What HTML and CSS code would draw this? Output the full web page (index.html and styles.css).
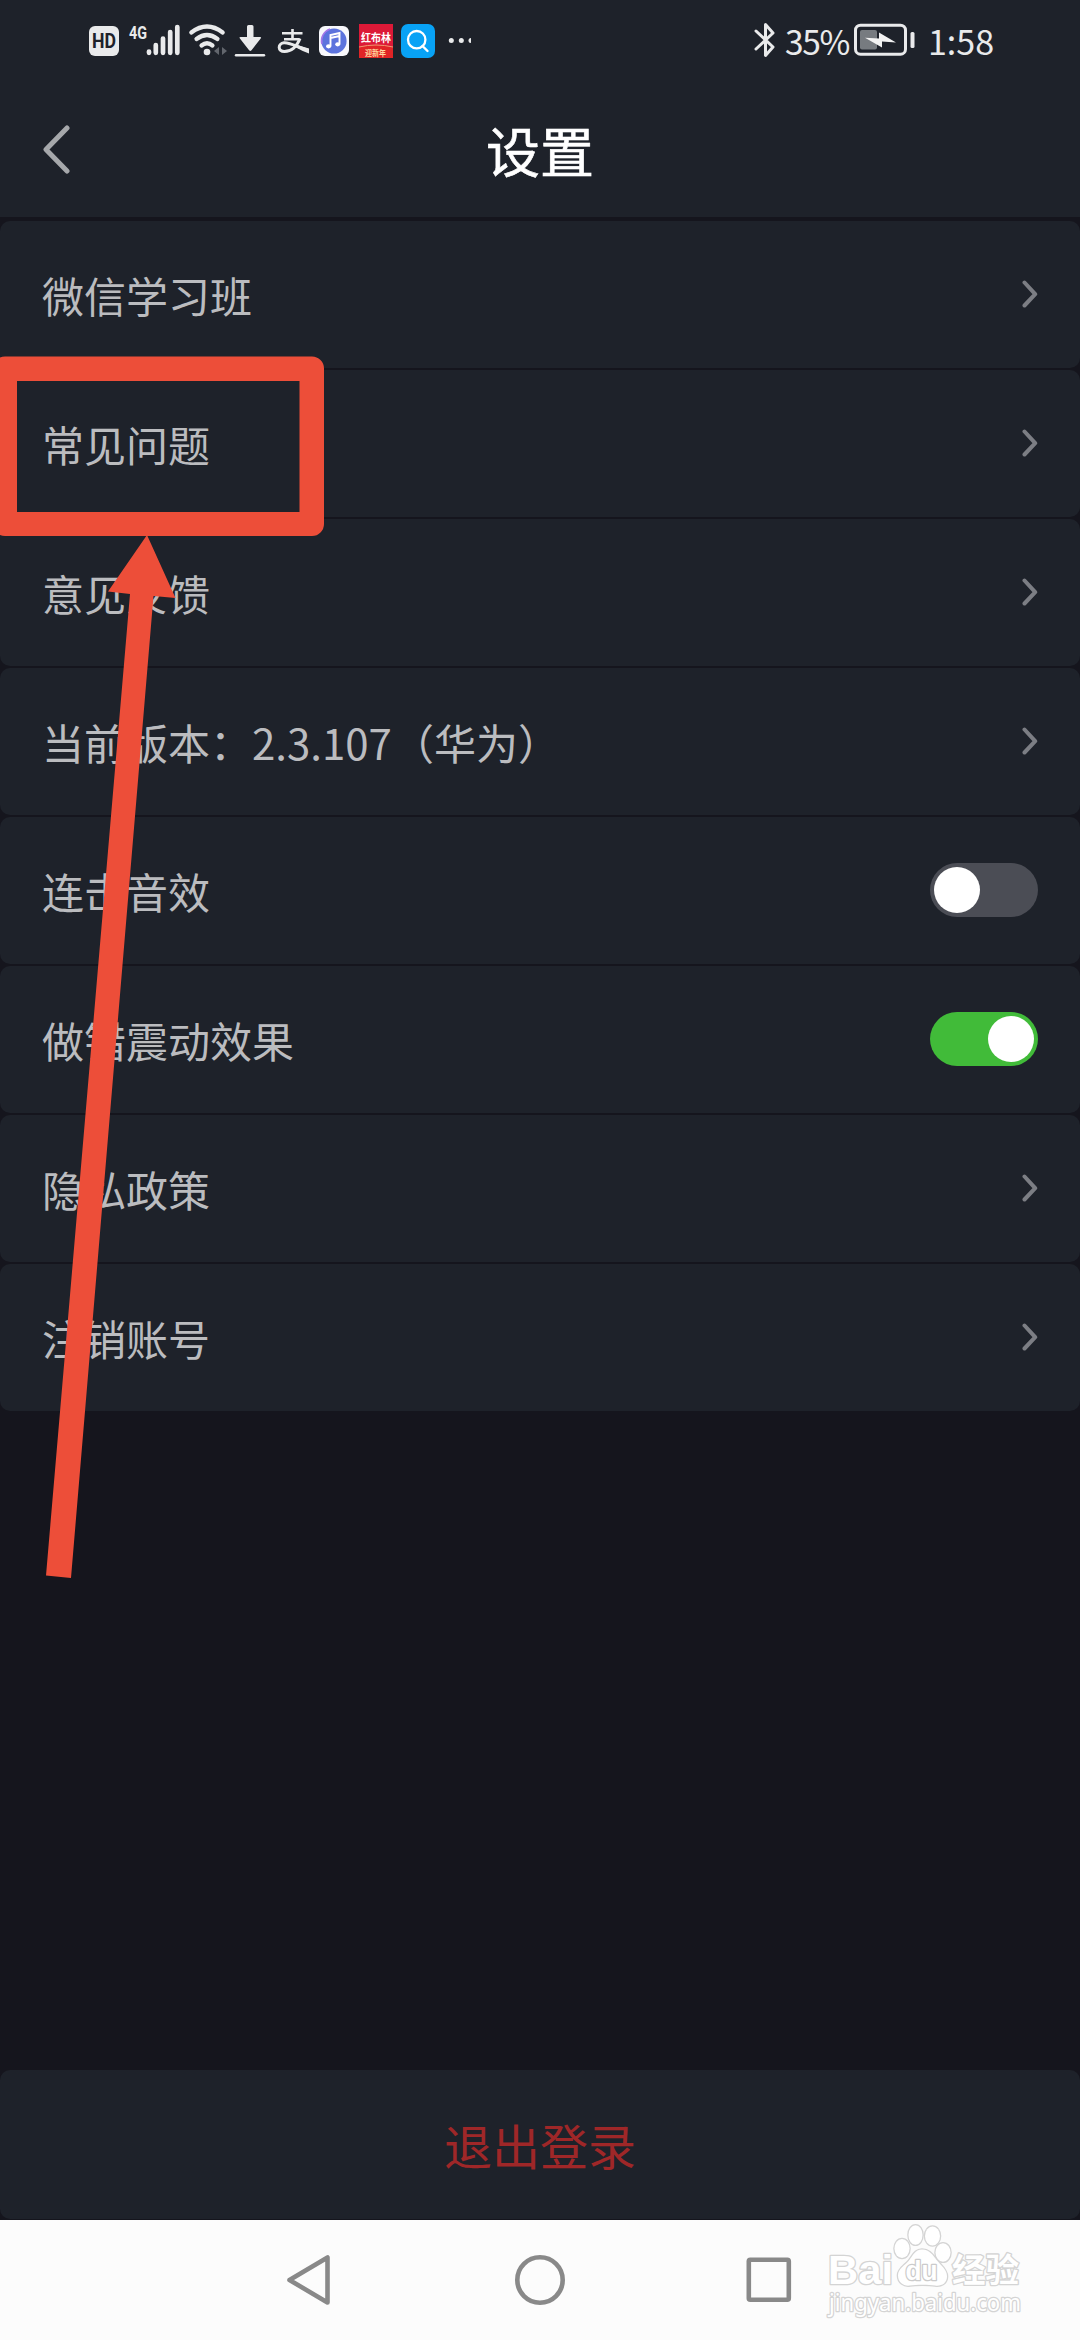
FILE: index.html
```html
<!DOCTYPE html>
<html lang="zh-CN">
<head>
<meta charset="utf-8">
<title>设置</title>
<link rel="stylesheet" href="styles.css">
</head>
<body>
<div class="screen">
  <div class="status">
    <svg class="status-icons" width="480" height="82" viewBox="0 0 480 82">
      <rect x="89" y="26" width="30" height="30" rx="6" fill="#e9eaeb"/>
      <text class="hd" x="92" y="48" textLength="24" lengthAdjust="spacingAndGlyphs">HD</text>
      <text class="net" x="129" y="38.500" textLength="18" lengthAdjust="spacingAndGlyphs">4G</text>
      <path d="M149 51.500v1.300M155.800 45v7.800M163 38.500v14.300M170.200 32v20.800M177.300 27v25.800" stroke="#e9eaeb" stroke-width="4.700" stroke-linecap="round"/>
      <g fill="none" stroke="#e9eaeb" stroke-width="4.200" stroke-linecap="round">
        <path d="M191.300 32.500Q207 20.500 222.700 32.500"/>
        <path d="M196.500 39Q207 31 217.500 39"/>
        <path d="M201.500 45.500Q207 41 212.500 45.500"/>
      </g>
      <circle cx="207" cy="52" r="3.300" fill="#e9eaeb"/>
      <path d="M219 47v8l-5-4zM222 47v8l5-4z" fill="#62666d"/>
      <path d="M247 26.500q0-1.500 1.500-1.500h3.500q1.500 0 1.500 1.500v10.500h6.500q2 0 .5 1.800l-9 11.500q-1.200 1.400-2.400 0l-9-11.500q-1.500-1.800.5-1.800h6.400z" fill="#e9eaeb"/>
      <path d="M236 55.200h28" stroke="#e9eaeb" stroke-width="2.400" stroke-linecap="round"/>
      <g fill="none" stroke="#e9eaeb">
        <path d="M292.500 29v10M282 33.300h20.500M284 39.200h15.500" stroke-width="2.600"/>
        <path d="M300 38.500C297 46 292 51.500 284.500 51.500C277.500 51.500 277.500 43.500 284 42.800C291 42.500 298 47.500 308.500 50.500" stroke-width="3"/>
      </g>
      <path d="M297 45l12 3.500v5q-8-3-13-6z" fill="#e9eaeb"/>
      <rect x="319" y="26" width="30" height="30" rx="6" fill="#f8f8fc"/>
      <circle cx="334" cy="41" r="12.600" fill="#5c73dd"/>
      <path d="M321.900 44A12.500 12.500 0 0 1 330 29" fill="none" stroke="#a477e8" stroke-width="1.500"/>
      <path d="M330.500 46V35l9-2v11M330.500 38l9-2" fill="none" stroke="#fff" stroke-width="1.900"/>
      <ellipse cx="328.600" cy="46.300" rx="2.600" ry="2.100" fill="#fff"/><ellipse cx="337.700" cy="44.300" rx="2.500" ry="2.100" fill="#fff"/>
      <rect x="359" y="24" width="34" height="34" fill="#dc1937"/>
      <path d="M359 47q17-4 34 0v11h-34z" fill="#e02426"/>
      <path d="M359 47q17-4 34 0" fill="none" stroke="#f09a70" stroke-width="1"/>
      <text class="ad" x="361" y="41.500" textLength="30" lengthAdjust="spacingAndGlyphs">红布林</text>
      <text class="ad-small" x="365" y="55.500" textLength="21" lengthAdjust="spacingAndGlyphs">迎新年</text>
      <rect x="401" y="24" width="34" height="34" rx="7" fill="#08a2f5"/>
      <circle cx="416.700" cy="39.700" r="8.700" fill="none" stroke="#fff" stroke-width="2.300"/>
      <path d="M422.500 46l5 5" stroke="#fff" stroke-width="2.400" stroke-linecap="round"/>
      <circle cx="451.300" cy="40.500" r="2.500" fill="#e9eaeb"/><circle cx="461.300" cy="40.500" r="2.500" fill="#e9eaeb"/>
      <path d="M471 38a2.500 2.500 0 0 0 0 5z" fill="#e9eaeb"/>
    </svg>
    <div class="status-right">
      <svg width="22" height="36" viewBox="0 0 22 36"><path d="M2 9l17 16-7.500 8.500v-31L19 11 2 27" fill="none" stroke="#e9eaeb" stroke-width="3" stroke-linejoin="round" stroke-linecap="round"/></svg>
      <span class="percent">35%</span>
      <svg class="battery" width="62" height="34" viewBox="0 0 62 34">
        <rect x="1.500" y="2.200" width="50" height="29" rx="5" fill="none" stroke="#e9eaeb" stroke-width="3"/>
        <rect x="6" y="7" width="17" height="19.500" rx="2" fill="#777b80"/>
        <path d="M11 14.800l14 .8V9.500L42 19.500l-14-1v6z" fill="#f2f2f2"/>
        <rect x="56.500" y="9" width="4" height="16" rx="1.500" fill="#e9eaeb"/>
      </svg>
      <span class="clock">1:58</span>
    </div>
  </div>
  <header class="header">
    <svg class="back" width="30" height="50" viewBox="0 0 30 50"><path d="M25 3L4 24.500l21 21.500" fill="none" stroke="#a6a8ab" stroke-width="5" stroke-linecap="round" stroke-linejoin="round"/></svg>
    <h1 class="title">设置</h1>
  </header>
  <main class="list">
    <div class="row"><span>微信学习班</span><svg class="chevron" viewBox="0 0 16 30"><path d="M2.500 3.500l10.700 11.700L2.500 26.500"/></svg></div>
    <div class="row"><span>常见问题</span><svg class="chevron" viewBox="0 0 16 30"><path d="M2.500 3.500l10.700 11.700L2.500 26.500"/></svg></div>
    <div class="row"><span>意见反馈</span><svg class="chevron" viewBox="0 0 16 30"><path d="M2.500 3.500l10.700 11.700L2.500 26.500"/></svg></div>
    <div class="row"><span>当前版本：2.3.107（华为）</span><svg class="chevron" viewBox="0 0 16 30"><path d="M2.500 3.500l10.700 11.700L2.500 26.500"/></svg></div>
    <div class="row"><span>连击音效</span><div class="toggle"><div class="knob"></div></div></div>
    <div class="row"><span>做错震动效果</span><div class="toggle toggle-on"><div class="knob"></div></div></div>
    <div class="row"><span>隐私政策</span><svg class="chevron" viewBox="0 0 16 30"><path d="M2.500 3.500l10.700 11.700L2.500 26.500"/></svg></div>
    <div class="row"><span>注销账号</span><svg class="chevron" viewBox="0 0 16 30"><path d="M2.500 3.500l10.700 11.700L2.500 26.500"/></svg></div>
  </main>
  <div class="logout">退出登录</div>
  <nav class="nav">
    <svg width="60" height="60" viewBox="0 0 60 60"><path d="M9.500 30L47.500 7.500v45z"/></svg>
    <svg width="60" height="60" viewBox="0 0 60 60"><circle cx="30" cy="30" r="22.700"/></svg>
    <svg width="60" height="60" viewBox="0 0 60 60"><rect x="8.800" y="9.800" width="40" height="40" rx="1.500"/></svg>
  </nav>

  <svg class="annotation" width="340" height="1600" viewBox="0 0 340 1600">
    <path fill-rule="evenodd" d="M5 356.500H312a12 12 0 0 1 12 12V524a12 12 0 0 1-12 12H5a12 12 0 0 1-12-12V368.500a12 12 0 0 1 12-12zM17 381V512H299.500V381z"/>
    <path d="M147 535L175.500 598L153.500 596L71 1578L46 1575.500L130 594L108 591.500z"/>
  </svg>
  <svg class="watermark" width="210" height="110" viewBox="0 0 210 110">
    <text class="wm-brand" x="8" y="63.500" textLength="65" lengthAdjust="spacingAndGlyphs">Bai</text>
    <g>
      <ellipse cx="82" cy="28.500" rx="7.500" ry="9.500"/><ellipse cx="95.500" cy="15" rx="7" ry="9.800"/>
      <ellipse cx="112.500" cy="16" rx="7.500" ry="9.500"/><ellipse cx="123" cy="32.500" rx="7.500" ry="9.300"/>
      <path d="M102 29.500c8 0 11 6 15 11s10 9 10 16-6 10-12 9-19-1-25 0-12-3-12-10 7-10 11-15 6-11 13-11z"/>
    </g>
    <text class="wm-du" x="85.500" y="60" textLength="32" lengthAdjust="spacingAndGlyphs">du</text>
    <text class="wm-cn" x="132" y="61.500" textLength="67" lengthAdjust="spacingAndGlyphs">经验</text>
    <text class="wm-url" x="9" y="90.500" textLength="192" lengthAdjust="spacingAndGlyphs">jingyan.baidu.com</text>
  </svg>
</div>
</body>
</html>
```
FILE: styles.css
```css
body {
  margin: 0;
  background: #15151d;
  font-family: "Noto Sans CJK SC", sans-serif;
}
.screen {
  position: relative;
  display: flex;
  flex-direction: column;
  width: 1080px;
  height: 2340px;
  overflow: hidden;
}
.status {
  display: flex;
  justify-content: space-between;
  height: 82px;
  background: #1e222a;
  color: #e9eaeb;
}
.status-right {
  display: flex;
  align-items: center;
  height: 80px;
  padding-right: 88px;
  font-size: 34px;
  line-height: 81px;
}
.percent {
  width: 64px;
  margin-left: 9px;
  font-size: 33.5px;
  letter-spacing: -1.4px;
  white-space: nowrap;
}
.battery { margin-left: 5px; }
.clock {
  width: 64px;
  margin-left: 12px;
  white-space: nowrap;
}
.hd { font: 700 20px Roboto, sans-serif; fill: #1e222a; }
.net { font: 700 18px Roboto, sans-serif; fill: #e9eaeb; }
.ad { font: 700 11px "Noto Sans CJK SC", sans-serif; fill: #fff; }
.ad-small { font: 700 8px "Noto Sans CJK SC", sans-serif; fill: #ffd9a0; }
.header {
  display: grid;
  grid-template-columns: 140px 1fr 140px;
  align-items: center;
  height: 135px;
  background: #1e222a;
}
.back { margin-left: 42px; }
.title {
  margin: 0;
  color: #fff;
  font-size: 54px;
  font-weight: 400;
  line-height: 134px;
  text-align: center;
  -webkit-text-stroke: 0.6px #fff;
}
.list {
  display: flex;
  flex-direction: column;
  gap: 2px;
  padding-top: 4px;
}
.row {
  display: flex;
  box-sizing: border-box;
  align-items: center;
  justify-content: space-between;
  height: 147px;
  padding: 0 42px 1px;
  border-radius: 10px;
  background: #1e222a;
  color: #bbbcbf;
  font-size: 42px;
}
.chevron {
  width: 16px;
  height: 30px;
  fill: none;
  stroke: #7c7e84;
  stroke-width: 4;
  stroke-linecap: round;
  stroke-linejoin: round;
}
.toggle {
  display: flex;
  box-sizing: border-box;
  width: 108px;
  height: 54px;
  padding: 4px;
  border-radius: 27px;
  background: #4b4d55;
}
.toggle-on {
  justify-content: flex-end;
  background: #41bb39;
}
.knob {
  width: 46px;
  height: 46px;
  border-radius: 50%;
  background: #fff;
}
.logout {
  height: 149px;
  margin-top: auto;
  margin-bottom: 1px;
  border-radius: 10px;
  background: #1e222a;
  color: #9f2728;
  font-size: 48px;
  line-height: 148px;
  text-align: center;
}
.nav {
  display: flex;
  align-items: center;
  justify-content: center;
  gap: 170px;
  height: 120px;
  background: #fcfcfc;
  fill: none;
  stroke: #898989;
  stroke-width: 4.6;
  stroke-linejoin: round;
}
.annotation {
  position: absolute;
  top: 0;
  left: 0;
  fill: #ed4e39;
}
.watermark {
  position: absolute;
  right: 50px;
  bottom: 10px;
  fill: #fff;
  stroke: #d4d4d4;
  stroke-width: 2.6;
  stroke-linejoin: round;
  paint-order: stroke;
}
.wm-brand { font: 700 41px "Liberation Sans", sans-serif; }
.wm-du { font: 700 27px "Liberation Sans", sans-serif; stroke: #cbcbcb; }
.wm-cn { font: 700 33px "Noto Sans CJK SC", sans-serif; }
.wm-url { font: 400 23px "Noto Sans", sans-serif; }
```
